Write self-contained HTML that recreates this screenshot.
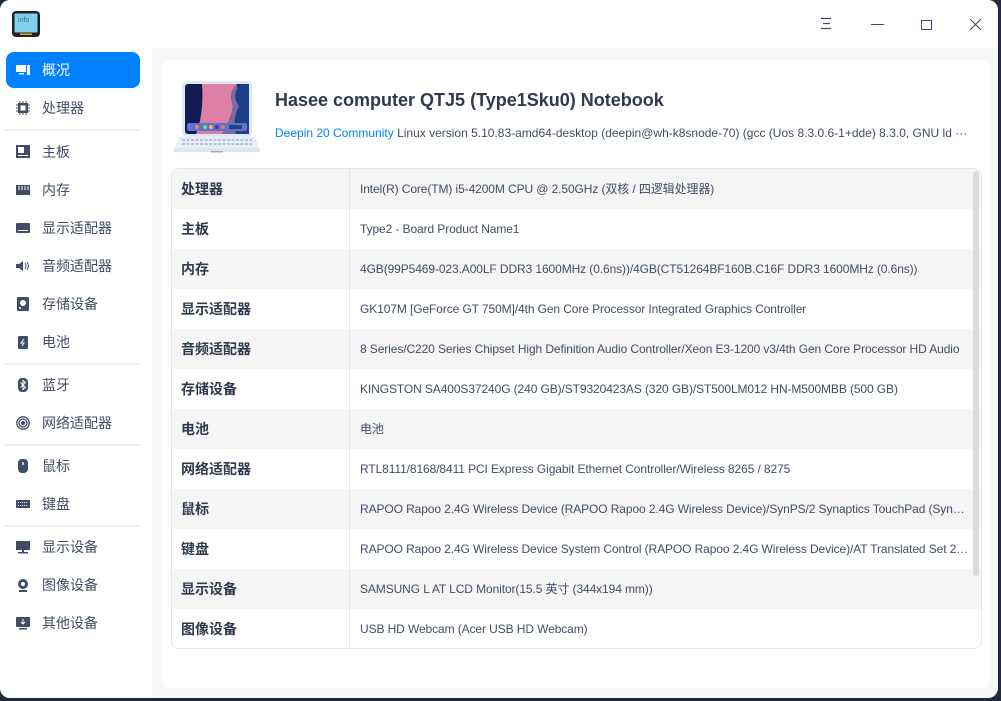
<!DOCTYPE html>
<html><head><meta charset="utf-8"><style>
*{margin:0;padding:0;box-sizing:border-box}
body{width:1001px;height:701px;background:#1d2b3d;font-family:"Liberation Sans","Noto Sans CJK SC",sans-serif;color:#414d68;overflow:hidden;position:relative}
.win{position:absolute;left:0;top:0;width:998px;height:698px;background:#f8f8f8;border-radius:10px;overflow:hidden}
.tb{position:absolute;left:0;top:0;width:998px;height:48px;background:#fff}
.side{position:absolute;left:0;top:48px;width:152px;height:650px;background:#fff}
.it{position:absolute;left:6px;width:134px;height:36px;border-radius:8px;font-size:14px;line-height:36px;padding-left:36px}
.it.a{background:#0081ff;color:#fff}
.ic{position:absolute;left:10px;top:11px;width:14px;height:14px}
.sep{position:absolute;left:5px;width:136px;height:2px;background:#f0f0f0}
.card{position:absolute;left:162px;top:60px;width:828px;height:628px;background:#fff;border-radius:10px}
.tbl{position:absolute;left:171px;top:168px;width:811px;height:481px;border:1px solid #e6e6e6;border-radius:8px;overflow:hidden}
.r{height:40px;display:flex;font-size:12px;line-height:40px}
.r:nth-child(odd){background:#f5f5f5}
.k{width:178px;border-right:1px solid #e6e6e6;padding-left:9px;font-size:14px;font-weight:bold;color:#303a4f}
.v{padding-left:10px;white-space:nowrap;overflow:hidden;width:620px;text-overflow:ellipsis;letter-spacing:-0.1px}
</style></head><body>
<div class="win">
<div class="tb">
 <svg style="position:absolute;left:12px;top:11px" width="28" height="26" viewBox="0 0 28 26"><rect x="0" y="0" width="28" height="26" rx="4" fill="#222"/><rect x="2.5" y="2.5" width="23" height="19" rx="1" fill="#7fd0e8"/><text x="6" y="11" font-size="7" fill="#3a6a8a" font-family="Liberation Sans">info</text><rect x="8" y="22.5" width="12" height="1.5" fill="#e0b020"/></svg>
 <svg style="position:absolute;left:820px;top:17px" width="12" height="14"><path d="M1 1.5h10M3 6.5h7M1 11.5h10" stroke="#414d68" stroke-width="1.2"/></svg>
 <div style="position:absolute;left:871px;top:24px;width:13px;height:1px;background:#414d68"></div>
 <div style="position:absolute;left:921px;top:20px;width:11px;height:10px;border:1.3px solid #414d68"></div>
 <svg style="position:absolute;left:969px;top:18px" width="13" height="13"><path d="M1 1l11 11M12 1L1 12" stroke="#414d68" stroke-width="1.1"/></svg>
</div>
<div class="side">
 <div class="it a" style="top:4px"><svg class="ic" viewBox="0 0 14 14"><rect x="0" y="2" width="10" height="7" fill="#fff"/><rect x="3" y="10" width="5" height="1.5" fill="#fff"/><rect x="11" y="2" width="3" height="10" fill="#fff"/></svg>概况</div>
 <div class="it" style="top:42px"><svg class="ic" viewBox="0 0 14 14"><rect x="2" y="2" width="10" height="10" fill="#414d68"/><rect x="4.5" y="4.5" width="5" height="5" fill="#fff"/><path d="M0 4h2M0 7h2M0 10h2M12 4h2M12 7h2M12 10h2M4 0v2M7 0v2M10 0v2M4 12v2M7 12v2M10 12v2" stroke="#414d68"/></svg>处理器</div>
 <div class="sep" style="top:81px"></div>
 <div class="it" style="top:86px"><svg class="ic" viewBox="0 0 14 14"><rect x="0" y="0" width="14" height="13" fill="#414d68"/><rect x="2" y="2" width="6" height="6" fill="#fff"/><rect x="2" y="10" width="10" height="1" fill="#fff"/></svg>主板</div>
 <div class="it" style="top:124px"><svg class="ic" viewBox="0 0 14 14"><rect x="0" y="2" width="14" height="10" fill="#414d68"/><path d="M3 3v4M6 3v4M9 3v4M12 3v4" stroke="#fff"/></svg>内存</div>
 <div class="it" style="top:162px"><svg class="ic" viewBox="0 0 14 14"><rect x="0" y="2" width="14" height="10" rx="1" fill="#414d68"/><rect x="2" y="9" width="10" height="1" fill="#fff"/></svg>显示适配器</div>
 <div class="it" style="top:200px"><svg class="ic" viewBox="0 0 14 14"><path d="M0 5h3l4-3v10l-4-3H0z" fill="#414d68"/><path d="M9 4q2 3 0 6M11 3q3 4 0 8" stroke="#414d68" fill="none"/></svg>音频适配器</div>
 <div class="it" style="top:238px"><svg class="ic" viewBox="0 0 14 14"><rect x="1" y="0" width="12" height="14" rx="1" fill="#414d68"/><circle cx="7" cy="6" r="3" fill="#fff"/><circle cx="4" cy="11" r="1" fill="#fff"/></svg>存储设备</div>
 <div class="it" style="top:276px"><svg class="ic" viewBox="0 0 14 14"><rect x="2" y="1" width="10" height="13" rx="1" fill="#414d68"/><path d="M8 4l-3 4h3l-2 3" stroke="#fff" fill="none"/></svg>电池</div>
 <div class="sep" style="top:315px"></div>
 <div class="it" style="top:319px"><svg class="ic" viewBox="0 0 14 14"><rect x="2" y="0" width="10" height="14" rx="4" fill="#414d68"/><path d="M4.5 4.5l5 5-2.5 2V2.5l2.5 2-5 5" stroke="#fff" fill="none"/></svg>蓝牙</div>
 <div class="it" style="top:357px"><svg class="ic" viewBox="0 0 14 14"><circle cx="7" cy="7" r="2" fill="#414d68"/><circle cx="7" cy="7" r="4" stroke="#414d68" fill="none" stroke-width="1.3"/><circle cx="7" cy="7" r="6.2" stroke="#414d68" fill="none" stroke-width="1.3"/></svg>网络适配器</div>
 <div class="sep" style="top:396px"></div>
 <div class="it" style="top:400px"><svg class="ic" viewBox="0 0 14 14"><rect x="2" y="0" width="10" height="14" rx="4" fill="#414d68"/><rect x="6.3" y="3" width="1.4" height="3" fill="#fff"/></svg>鼠标</div>
 <div class="it" style="top:438px"><svg class="ic" viewBox="0 0 14 14"><rect x="0" y="3" width="14" height="8" fill="#414d68"/><path d="M2 5.5h10M2 8.5h10" stroke="#fff" stroke-dasharray="1 1"/></svg>键盘</div>
 <div class="sep" style="top:477px"></div>
 <div class="it" style="top:481px"><svg class="ic" viewBox="0 0 14 14"><rect x="0" y="1" width="14" height="9" fill="#414d68"/><rect x="6" y="10" width="2" height="2" fill="#414d68"/><rect x="2" y="12" width="10" height="1.5" fill="#414d68"/></svg>显示设备</div>
 <div class="it" style="top:519px"><svg class="ic" viewBox="0 0 14 14"><circle cx="7" cy="6" r="5" fill="#414d68"/><circle cx="7" cy="6" r="2" fill="#fff"/><rect x="3" y="12" width="8" height="2" fill="#414d68"/></svg>图像设备</div>
 <div class="it" style="top:557px"><svg class="ic" viewBox="0 0 14 14"><rect x="0" y="1" width="14" height="10" rx="1" fill="#414d68"/><path d="M7 3v5M5 6l2 2 2-2" stroke="#fff" fill="none"/><rect x="3" y="12" width="8" height="1.5" fill="#414d68"/></svg>其他设备</div>
</div>
<div class="card">
 <svg style="position:absolute;left:12px;top:18px" width="88" height="80" viewBox="0 0 88 80"><rect x="8" y="3" width="70" height="56" rx="5" fill="#dfe7f7"/><rect x="11" y="6" width="64" height="50" rx="3" fill="#131a52"/><path d="M28 6h35q-8 8-5 18t-10 32H22q8-20 6-50z" fill="#dd80a6"/><path d="M63 6q-8 8-5 18t-10 32h15q-4-15 3-28z" fill="#7a6aa0"/><path d="M66 6h9v50H62q-4-15 3-28q-8-10 1-22z" fill="#1c3f85"/><rect x="13" y="45" width="60" height="8" rx="2" fill="#5f73c8"/><circle cx="17" cy="49" r="2" fill="#4a7dff"/><circle cx="23" cy="49" r="2" fill="#ff7a5a"/><circle cx="31" cy="49" r="2" fill="#60e09a"/><circle cx="37" cy="49" r="2" fill="#ffb040"/><circle cx="43" cy="49" r="2" fill="#5030c0"/><circle cx="49" cy="49" r="2" fill="#ff6a60"/><rect x="55" y="47" width="13" height="4" fill="#2a3f8a"/><path d="M5 59h76l4 11H1z" fill="#e8eef8"/><path d="M8 62h70M8 66h70" stroke="#b9c4d8" stroke-width="2" stroke-dasharray="3 1.5"/><rect x="0" y="70" width="86" height="4" rx="1" fill="#dde5f3"/><rect x="37" y="73" width="12" height="1.5" fill="#aab"/></svg>
 <div style="position:absolute;left:113px;top:30px;font-size:18px;font-weight:bold;color:#303a4f">Hasee computer QTJ5 (Type1Sku0) Notebook</div>
 <div style="position:absolute;left:113px;top:66px;font-size:12px;white-space:nowrap;width:708px;overflow:hidden"><span style="color:#0081ff">Deepin 20 Community</span> Linux version 5.10.83-amd64-desktop (deepin@wh-k8snode-70) (gcc (Uos 8.3.0.6-1+dde) 8.3.0, GNU ld ···</div>
</div>
<div class="tbl">
 <div class="r"><div class="k">处理器</div><div class="v">Intel(R) Core(TM) i5-4200M CPU @ 2.50GHz (双核 / 四逻辑处理器)</div></div>
 <div class="r"><div class="k">主板</div><div class="v">Type2 - Board Product Name1</div></div>
 <div class="r"><div class="k">内存</div><div class="v">4GB(99P5469-023.A00LF DDR3 1600MHz (0.6ns))/4GB(CT51264BF160B.C16F DDR3 1600MHz (0.6ns))</div></div>
 <div class="r"><div class="k">显示适配器</div><div class="v">GK107M [GeForce GT 750M]/4th Gen Core Processor Integrated Graphics Controller</div></div>
 <div class="r"><div class="k">音频适配器</div><div class="v">8 Series/C220 Series Chipset High Definition Audio Controller/Xeon E3-1200 v3/4th Gen Core Processor HD Audio</div></div>
 <div class="r"><div class="k">存储设备</div><div class="v">KINGSTON SA400S37240G (240 GB)/ST9320423AS (320 GB)/ST500LM012 HN-M500MBB (500 GB)</div></div>
 <div class="r"><div class="k">电池</div><div class="v">电池</div></div>
 <div class="r"><div class="k">网络适配器</div><div class="v">RTL8111/8168/8411 PCI Express Gigabit Ethernet Controller/Wireless 8265 / 8275</div></div>
 <div class="r"><div class="k">鼠标</div><div class="v">RAPOO Rapoo 2.4G Wireless Device (RAPOO Rapoo 2.4G Wireless Device)/SynPS/2 Synaptics TouchPad (Synaptics)</div></div>
 <div class="r"><div class="k">键盘</div><div class="v">RAPOO Rapoo 2.4G Wireless Device System Control (RAPOO Rapoo 2.4G Wireless Device)/AT Translated Set 2 keyboard</div></div>
 <div class="r"><div class="k">显示设备</div><div class="v">SAMSUNG  L AT LCD Monitor(15.5 英寸 (344x194 mm))</div></div>
 <div class="r"><div class="k">图像设备</div><div class="v">USB HD Webcam (Acer USB HD Webcam)</div></div>
 <div style="position:absolute;right:2px;top:2px;width:6px;height:405px;border-radius:3px;background:#dcdcdc"></div>
</div>
</div>
</body></html>
